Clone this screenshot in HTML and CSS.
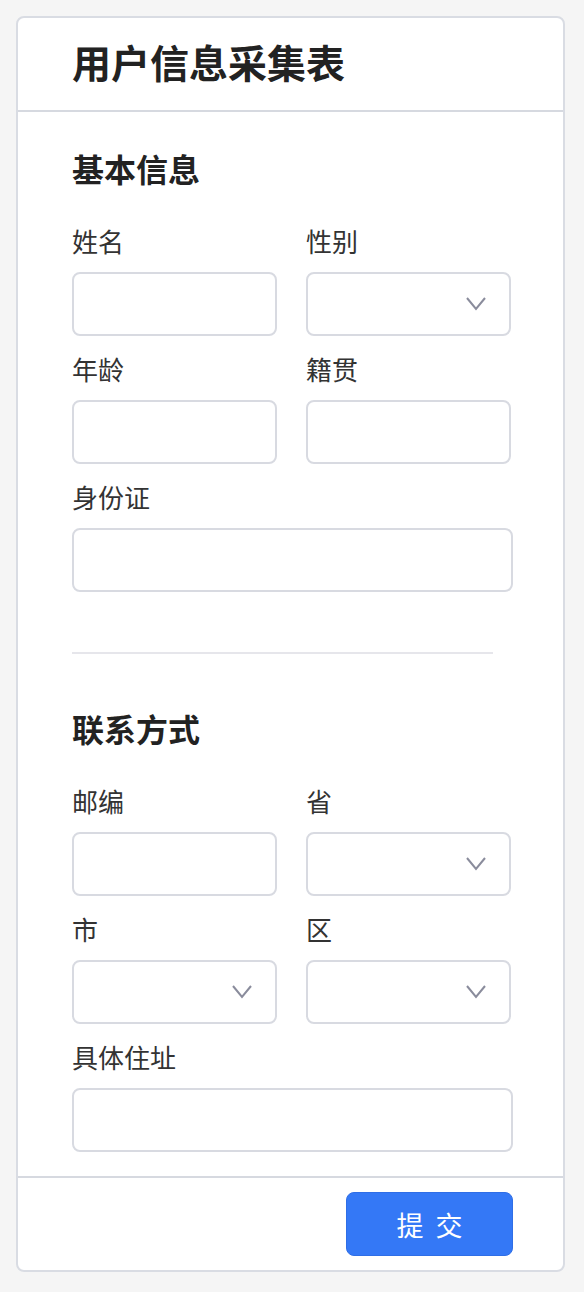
FILE: index.html
```html
<!DOCTYPE html>
<html lang="zh">
<head>
<meta charset="utf-8">
<title>用户信息采集表</title>
<link rel="stylesheet" href="styles.css">
</head>
<body>
<div class="card">
  <div class="card-header">
    <h1 class="title">用户信息采集表</h1>
  </div>
  <div class="card-body">
    <section class="section">
      <h2 class="section-title">基本信息</h2>
      <div class="grid">
        <div class="field">
          <label class="label">姓名</label>
          <input class="input" type="text">
        </div>
        <div class="field">
          <label class="label">性别</label>
          <div class="input select"><svg class="chev" width="22" height="16" viewBox="0 0 22 16"><path d="M2 2 L11 13 L20 2" fill="none" stroke="#8a8c9c" stroke-width="2"/></svg></div>
        </div>
        <div class="field">
          <label class="label">年龄</label>
          <input class="input" type="text">
        </div>
        <div class="field">
          <label class="label">籍贯</label>
          <input class="input" type="text">
        </div>
        <div class="field wide">
          <label class="label">身份证</label>
          <input class="input" type="text">
        </div>
      </div>
    </section>
    <hr class="divider">
    <section class="section">
      <h2 class="section-title">联系方式</h2>
      <div class="grid">
        <div class="field">
          <label class="label">邮编</label>
          <input class="input" type="text">
        </div>
        <div class="field">
          <label class="label">省</label>
          <div class="input select"><svg class="chev" width="22" height="16" viewBox="0 0 22 16"><path d="M2 2 L11 13 L20 2" fill="none" stroke="#8a8c9c" stroke-width="2"/></svg></div>
        </div>
        <div class="field">
          <label class="label">市</label>
          <div class="input select"><svg class="chev" width="22" height="16" viewBox="0 0 22 16"><path d="M2 2 L11 13 L20 2" fill="none" stroke="#8a8c9c" stroke-width="2"/></svg></div>
        </div>
        <div class="field">
          <label class="label">区</label>
          <div class="input select"><svg class="chev" width="22" height="16" viewBox="0 0 22 16"><path d="M2 2 L11 13 L20 2" fill="none" stroke="#8a8c9c" stroke-width="2"/></svg></div>
        </div>
        <div class="field wide">
          <label class="label">具体住址</label>
          <input class="input" type="text">
        </div>
      </div>
    </section>
  </div>
  <div class="card-footer">
    <button class="btn" type="button">提交</button>
  </div>
</div>
</body>
</html>
```
FILE: styles.css
```css
* { box-sizing: border-box; }
html, body { margin: 0; padding: 0; }
body {
  background: #f5f5f5;
  padding: 16px 0 0 16px;
  font-family: "Noto Sans CJK SC", "Noto Sans", sans-serif;
  color: #222;
}
.card {
  width: 549px;
  height: 1256px;
  background: #fff;
  border: 2px solid #d9dce3;
  border-radius: 8px;
  display: flex;
  flex-direction: column;
}
.card-header {
  height: 94px;
  border-bottom: 2px solid #d6d9e0;
  padding-left: 54px;
  padding-bottom: 6px;
  display: flex;
  align-items: center;
}
.title {
  margin: 0;
  font-size: 39px;
  font-weight: 700;
  line-height: 1;
  color: #222;
}
.card-body {
  flex: 1;
  padding: 0 50px 0 54px;
}
.section { padding-top: 34px; }
.section-title {
  margin: 0 0 36px;
  font-size: 32px;
  font-weight: 700;
  line-height: 44px;
  color: #222;
}
.grid {
  display: grid;
  grid-template-columns: 205px 205px;
  column-gap: 29px;
  row-gap: 18px;
}
.field {
  display: flex;
  flex-direction: column;
}
.wide { grid-column: 1 / -1; }
.wide .input { width: 441px; }
.label {
  font-size: 26px;
  line-height: 30px;
  color: #333;
  margin-bottom: 16px;
}
.input {
  width: 205px;
  height: 64px;
  border: 2px solid #d8dae1;
  border-radius: 8px;
  background: #fff;
  outline: none;
  font: inherit;
}
.select {
  display: flex;
  align-items: center;
  justify-content: flex-end;
  padding-right: 22px;
}
.chev { display: block; }
.divider {
  margin: 60px 20px 0 0;
  border: 0;
  height: 2px;
  background: #e6e6eb;
}
.section + .divider + .section { padding-top: 52px; }
.card-footer {
  height: 94px;
  border-top: 2px solid #d6d9e0;
  display: flex;
  align-items: center;
  justify-content: flex-end;
  padding-right: 50px;
}
.btn {
  width: 167px;
  height: 64px;
  background: #3478f6;
  border: 1px solid #2f6ee6;
  border-radius: 8px;
  color: #fff;
  font-family: inherit;
  font-size: 27px;
  letter-spacing: 12px;
  text-indent: 12px;
  padding: 0;
}
```
